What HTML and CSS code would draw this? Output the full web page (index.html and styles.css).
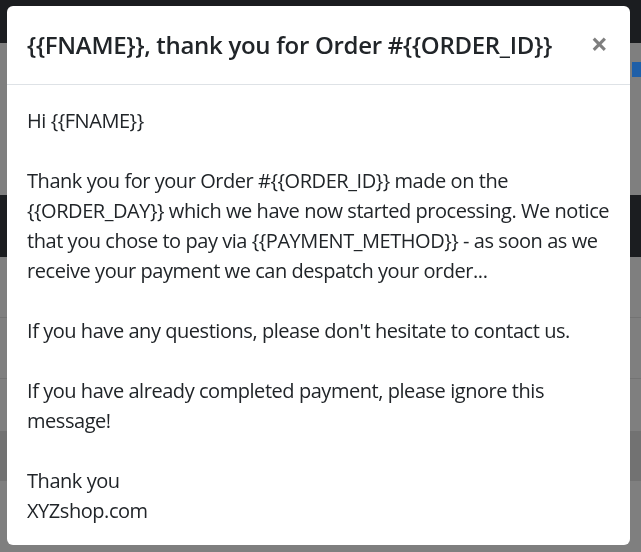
FILE: index.html
```html
<!DOCTYPE html>
<html lang="en">
<head>
    <meta charset="UTF-8">
    <meta name="viewport" content="width=device-width, initial-scale=1.0">
    <title>Order email preview</title>
    <link rel="stylesheet" href="styles.css">
</head>
<body>
    <div class="page">
        <nav class="navbar"></nav>
        <div class="toolbar">
            <span class="toolbar-btn"></span>
        </div>
        <div class="page-band"></div>
        <div class="page-row"></div>
        <div class="page-row"></div>
        <div class="page-row page-row-dark"></div>
    </div>

    <div class="modal">
        <div class="modal-content">
            <div class="modal-header">
                <h5 class="modal-title">{{FNAME}}, thank you for Order #{{ORDER_ID}}</h5>
                <button type="button" class="close" aria-label="Close">&times;</button>
            </div>
            <div class="modal-body">
                Hi {{FNAME}}<br>
                <br>
                Thank you for your Order #{{ORDER_ID}} made on the<br>
                {{ORDER_DAY}} which we have now started processing. We notice<br>
                that you chose to pay via {{PAYMENT_METHOD}} - as soon as we<br>
                receive your payment we can despatch your order...<br>
                <br>
                If you have any questions, please don't hesitate to contact us.<br>
                <br>
                If you have already completed payment, please ignore this<br>
                message!<br>
                <br>
                Thank you<br>
                XYZshop.com
            </div>
        </div>
    </div>
</body>
</html>
```

FILE: styles.css
```css
body {
    margin: 0;
    font-family: 'Open Sans', 'Noto Sans', sans-serif;
    background-color: #7f7f7f;
    color: #212529;
    overflow: hidden;
}
.page {
    height: 552px;
    display: flex;
    flex-direction: column;
}
.navbar {
    height: 43px;
    background-color: #1b1d20;
}
.toolbar {
    height: 152px;
    display: flex;
    justify-content: flex-end;
    align-items: flex-start;
    padding-top: 19px;
    box-sizing: border-box;
}
.toolbar-btn {
    width: 9px;
    height: 15px;
    background-color: #1f5fa8;
}
.page-band {
    height: 62px;
    background-color: #1b1d20;
}
.page-row {
    height: 60px;
    border-bottom: 1px solid #737373;
}
.page-row-dark {
    margin-top: 52px;
    height: 50px;
    background-color: #727272;
    border-bottom: none;
}
.modal {
    position: fixed;
    top: 6px;
    left: 7px;
    width: 623px;
}
.modal-content {
    background-color: #fff;
    border-radius: 6px;
    overflow: hidden;
}
.modal-header {
    display: flex;
    align-items: center;
    justify-content: space-between;
    padding: 20px 20px 20px 20px;
    height: 38px;
    border-bottom: 1px solid #dee2e6;
}
.modal-title {
    margin: 0;
    font-size: 24px;
    font-weight: 600;
    line-height: 38px;
    letter-spacing: -0.3px;
}
.close {
    border: none;
    background: none;
    padding: 0 2px 0 4px;
    margin-top: -3px;
    font-family: 'Open Sans', sans-serif;
    font-size: 30px;
    font-weight: 700;
    line-height: 1;
    color: #000;
    opacity: 0.5;
    cursor: pointer;
}
.modal-body {
    padding: 21px 20px 19px 20px;
    font-size: 20px;
    line-height: 30px;
    letter-spacing: -0.45px;
    white-space: nowrap;
}
```
